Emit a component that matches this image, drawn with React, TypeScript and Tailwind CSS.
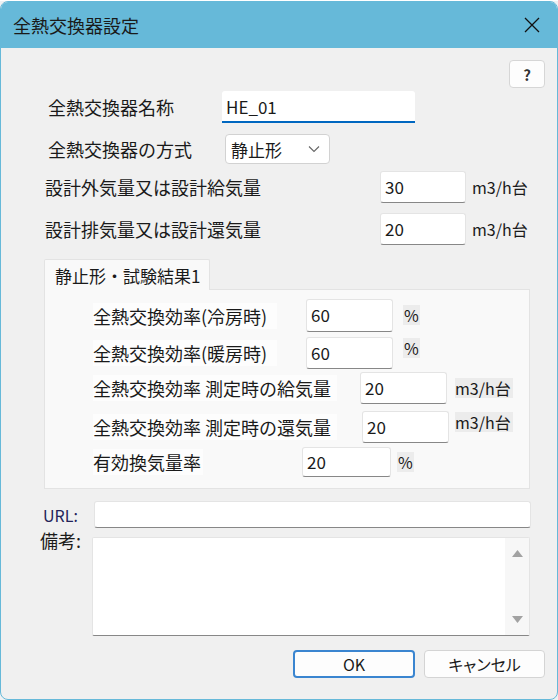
import React from "react";

function Box({ value, className }: { value: string; className: string }) {
  return (
    <input
      readOnly
      defaultValue={value}
      className={`bg-white rounded-[3px] border border-[#e4e4e4] border-b-[#878787] pl-[4px] pb-[2px] text-[17px] text-[#1a1a1a] outline-none ${className}`}
    />
  );
}

function Unit({ children, className = "" }: { children: React.ReactNode; className?: string }) {
  return <span className={`bg-[#ececec] text-[16px] leading-[20px] text-[#1a1a1a] ${className}`}>{children}</span>;
}

export default function App() {
  return (
    <div className="w-[558px] h-[700px] bg-[#eef1f3] font-['Noto_Sans_CJK_JP','Noto_Sans',sans-serif] text-[#1a1a1a]">
      <div className="mt-[1px] h-[699px] flex flex-col rounded-[8px] border border-[#66b9d9] bg-[#f0f0f0] overflow-hidden">
        {/* title bar */}
        <div className="h-[46px] shrink-0 bg-[#66b9d9] flex items-center justify-between pl-[12px] pr-[16px]">
          <span className="text-[18px] leading-none">全熱交換器設定</span>
          <svg width="16" height="16" viewBox="0 0 16 16" className="mr-[1px]">
            <path d="M1 1 L15 15 M15 1 L1 15" stroke="#111" strokeWidth="1.3" />
          </svg>
        </div>

        <div className="flex flex-col text-[18px] leading-none">
          <div className="flex justify-end pr-[12px] mt-[12px]">
            <button className="w-[36px] h-[28px] rounded-[4px] border border-[#d6d6d6] bg-[#fdfdfd] text-[15px] font-bold text-[#333]">?</button>
          </div>

          <div className="flex items-center h-[32px] mt-[3px] pl-[47px]">
            <span className="w-[174px]">全熱交換器名称</span>
            <input
              readOnly
              defaultValue="HE_01"
              className="w-[193px] h-[32px] bg-white rounded-t-[3px] border-b-2 border-[#0067c0] pl-[4px] text-[17px] outline-none"
            />
          </div>

          <div className="flex items-center h-[30px] mt-[11px] pl-[47px]">
            <span className="w-[177px]">全熱交換器の方式</span>
            <div className="w-[105px] h-[30px] flex items-center justify-between bg-white rounded-[4px] border border-[#d2d2d2] pl-[5px] pr-[9px]">
              <span className="text-[17px]">静止形</span>
              <svg width="12" height="8" viewBox="0 0 12 8">
                <path d="M1 1.5 L6 6.5 L11 1.5" fill="none" stroke="#666" strokeWidth="1.1" />
              </svg>
            </div>
          </div>

          <div className="flex items-center h-[32px] mt-[7px] pl-[44px]">
            <span className="w-[335px]">設計外気量又は設計給気量</span>
            <Box value="30" className="w-[86px] h-[32px]" />
            <span className="ml-[6px] text-[16px]">m3/h台</span>
          </div>

          <div className="flex items-center h-[32px] mt-[10px] pl-[44px]">
            <span className="w-[335px]">設計排気量又は設計還気量</span>
            <Box value="20" className="w-[86px] h-[32px]" />
            <span className="ml-[6px] text-[16px]">m3/h台</span>
          </div>

          {/* tab */}
          <div className="mt-[14px] ml-[43px] flex flex-col">
            <div className="w-[166px] h-[31px] bg-[#f9f9f9] border border-b-0 border-[#e3e3e3] rounded-t-[2px] flex items-center pl-[10px] text-[17px] relative z-10">
              静止形・試験結果1
            </div>
            <div className="-mt-px w-[486px] h-[200px] bg-[#f9f9f9] border border-[#e3e3e3] flex flex-col pt-[9px] pl-[48px]">
              <div className="flex h-[33px]">
                <span className="w-[213px] self-center"><span className="bg-[#fdfdfd] pr-[10px]">全熱交換効率(冷房時)</span></span>
                <Box value="60" className="w-[87px] h-[33px]" />
                <Unit className="ml-[10px] mt-[6px] self-start px-[1px]">%</Unit>
              </div>
              <div className="flex h-[32px] mt-[5px]">
                <span className="w-[213px] self-center"><span className="bg-[#fdfdfd] pr-[10px]">全熱交換効率(暖房時)</span></span>
                <Box value="60" className="w-[87px] h-[32px]" />
                <Unit className="ml-[10px] mt-[1px] self-start px-[1px]">%</Unit>
              </div>
              <div className="flex h-[32px] mt-[3px]">
                <span className="w-[267px] self-center"><span className="bg-[#fdfdfd] pr-[6px]">全熱交換効率 測定時の給気量</span></span>
                <Box value="20" className="w-[87px] h-[32px]" />
                <Unit className="ml-[8px] self-center pr-[2px]">m3/h台</Unit>
              </div>
              <div className="flex h-[32px] mt-[7px]">
                <span className="w-[269px] self-center"><span className="bg-[#fdfdfd] pr-[6px]">全熱交換効率 測定時の還気量</span></span>
                <Box value="20" className="w-[87px] h-[32px]" />
                <Unit className="ml-[6px] mt-[1px] self-start pr-[2px]">m3/h台</Unit>
              </div>
              <div className="flex h-[30px] mt-[4px]">
                <span className="w-[209px] self-center"><span className="bg-[#fdfdfd] pr-[2px]">有効換気量率</span></span>
                <Box value="20" className="w-[89px] h-[30px]" />
                <Unit className="ml-[6px] self-center px-[1px]">%</Unit>
              </div>
            </div>
          </div>

          <div className="flex items-center h-[27px] mt-[12px] pl-[42px]">
            <span className="w-[35px] text-[16px] text-[#23235a]">URL:</span>
            <Box value="" className="ml-[16px] w-[437px] h-[27px]" />
          </div>

          <div className="flex mt-[9px] pl-[39px]">
            <span className="w-[52px] -mt-[6px] text-[18px] leading-none">備考:</span>
            <div className="w-[438px] h-[99px] bg-white border border-[#e4e4e4] border-b-[#878787] rounded-[2px] flex justify-end">
              <div className="w-[24px] h-full bg-[#f7f7f7] flex flex-col items-center justify-between py-[12px]">
                <svg width="11" height="7" viewBox="0 0 11 7"><path d="M5.5 0 L11 7 L0 7 Z" fill="#a2a2a2" /></svg>
                <svg width="11" height="7" viewBox="0 0 11 7"><path d="M0 0 L11 0 L5.5 7 Z" fill="#a2a2a2" /></svg>
              </div>
            </div>
          </div>

          <div className="flex justify-end gap-[9px] pr-[12px] mt-[14px]">
            <button className="w-[122px] h-[28px] rounded-[4px] border-2 border-[#3a85d0] bg-[#fdfdfd] text-[16px]">OK</button>
            <button className="w-[121px] h-[28px] rounded-[4px] border border-[#d4d4d4] bg-[#fdfdfd] text-[16px] [font-feature-settings:'palt']">キャンセル</button>
          </div>
        </div>
      </div>
    </div>
  );
}
